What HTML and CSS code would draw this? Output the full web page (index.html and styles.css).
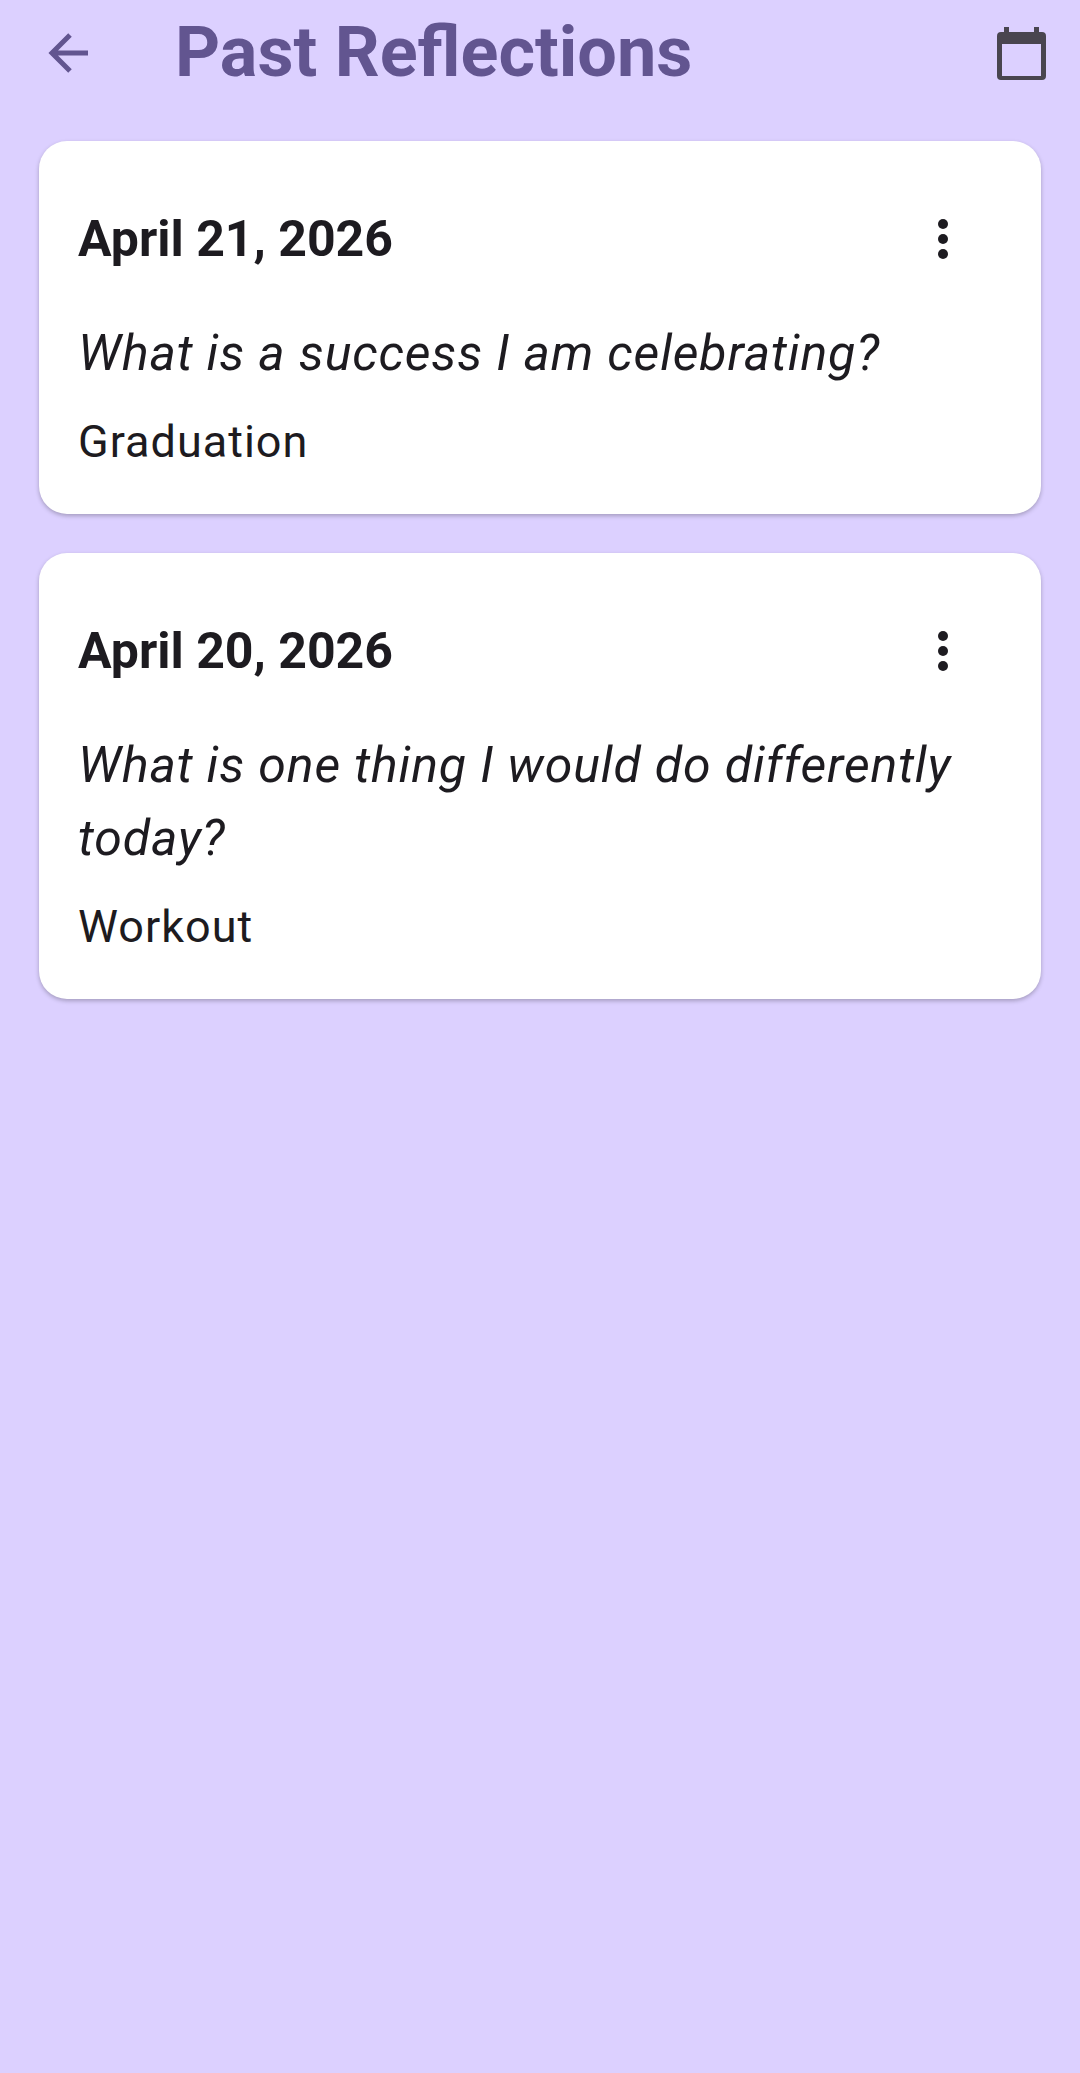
FILE: index.html
```html
<!DOCTYPE html>
<html lang="en">
<head>
    <meta charset="UTF-8" />
    <meta name="viewport" content="width=device-width, initial-scale=1" />
    <title>Past Reflections</title>
    <link rel="stylesheet" href="styles.css">
</head>
<body>
    <header class="topbar">
        <svg class="back-icon" viewBox="0 0 42 42" aria-hidden="true">
            <path d="M40 21H4M22 3 4 21l18 18" />
        </svg>
        <h1>Past Reflections</h1>
        <svg class="calendar-icon" viewBox="0 0 49 53" aria-hidden="true">
            <path fill-rule="evenodd" d="M7 0h5v5h25V0h5v5h3a4 4 0 0 1 4 4v40a4 4 0 0 1-4 4H4a4 4 0 0 1-4-4V9a4 4 0 0 1 4-4h3zM5 17v32h39V17z" />
        </svg>
    </header>

    <main class="list">
        <article class="card">
            <div class="card-head">
                <h2>April 21, 2026</h2>
                <span class="more-dots" aria-label="More"><i></i><i></i><i></i></span>
            </div>
            <p class="question">What is a success I am celebrating?</p>
            <p class="answer">Graduation</p>
        </article>
        <article class="card">
            <div class="card-head">
                <h2>April 20, 2026</h2>
                <span class="more-dots" aria-label="More"><i></i><i></i><i></i></span>
            </div>
            <p class="question">What is one thing I would do differently today?</p>
            <p class="answer">Workout</p>
        </article>
    </main>
</body>
</html>
```

FILE: styles.css
```css
body {
    font-family: Roboto, "Noto Sans", sans-serif;
    background: #dcd0ff;
    margin: 0;
    min-height: 100vh;
    color: #1d1b20;
}
.topbar {
    display: flex;
    align-items: center;
    height: 106px;
    padding: 0 34px 0 48px;
}
.back-icon {
    width: 42px;
    height: 42px;
    flex: none;
    fill: none;
    stroke: #625590;
    stroke-width: 5;
}
h1 {
    flex: 1;
    margin: 0 0 2px 85px;
    font-size: 70.2px;
    font-weight: 700;
    color: #625590;
}
.calendar-icon {
    width: 49px;
    height: 53px;
    flex: none;
    fill: #49454f;
}
.list {
    display: flex;
    flex-direction: column;
    gap: 39px;
    padding: 35px 39px 0;
}
.card {
    background: white;
    border-radius: 28px;
    padding: 41px 40px 43px 39px;
    box-shadow: 0 2px 4px rgba(0, 0, 0, 0.25);
}
.card-head {
    display: flex;
    align-items: center;
    justify-content: space-between;
    height: 114px;
    padding-right: 53px;
}
h2 {
    margin: 0;
    font-size: 50px;
    font-weight: 700;
}
.more-dots {
    display: flex;
    flex-direction: column;
    gap: 4.6px;
}
.more-dots i {
    width: 10px;
    height: 10px;
    border-radius: 50%;
    background: #1d1b20;
}
.question {
    margin: 21px 0 0;
    font-size: 50px;
    font-style: italic;
    line-height: 73px;
    letter-spacing: 0.87px;
}
.answer {
    margin: 23px 0 0;
    font-size: 45px;
    line-height: 58px;
    letter-spacing: 1px;
}
```
